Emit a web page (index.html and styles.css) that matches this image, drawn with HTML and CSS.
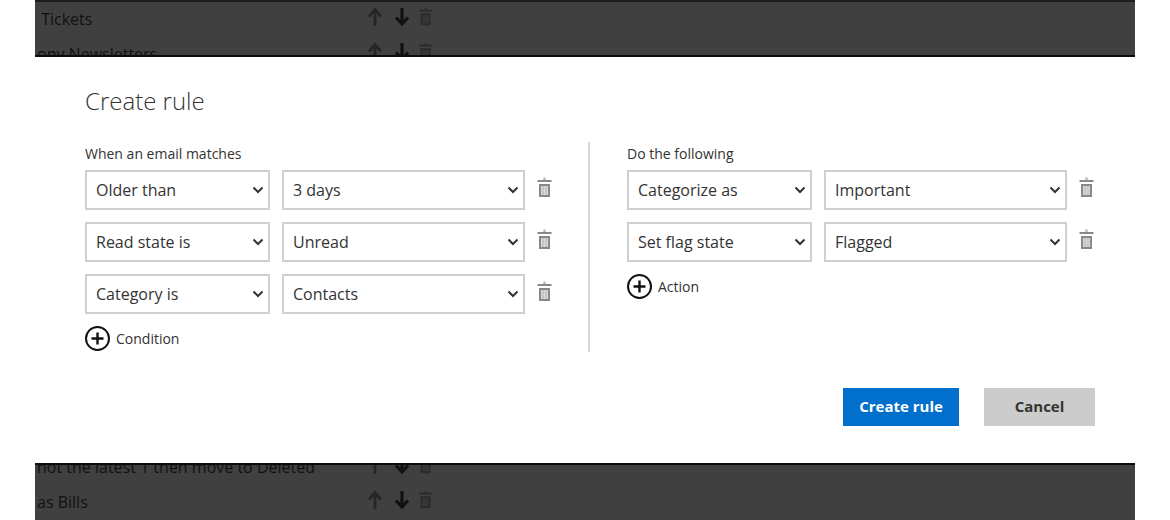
FILE: index.html
```
<!DOCTYPE html>
<html lang="en">
<head>
    <meta charset="UTF-8">
    <meta name="viewport" content="width=device-width, initial-scale=1.0">
    <title>Create rule</title>
    <link rel="stylesheet" href="styles.css">
</head>
<body>
    <svg class="sprite" aria-hidden="true">
        <symbol id="trash" viewBox="0 0 16 22">
            <path d="M7.500 0.500v3" fill="none" stroke="currentColor" stroke-width="2.4" opacity="0.6"/>
            <path d="M0.500 4h14" fill="none" stroke="currentColor" stroke-width="2"/>
            <path d="M3 8h9v11h-9z" fill="currentColor" fill-opacity="0.3" stroke="currentColor" stroke-width="2"/>
            <path d="M6 9v9M9 9v9" fill="none" stroke="currentColor" stroke-width="1" opacity="0.5"/>
        </symbol>
        <symbol id="up" viewBox="0 0 16 20">
            <path d="M8 19V3M2 9.5l6-7 6 7" fill="none" stroke="currentColor" stroke-width="2.8"/>
        </symbol>
        <symbol id="down" viewBox="0 0 16 20">
            <path d="M8 1v16M2 10.500l6 6.500 6-6.500" fill="none" stroke="currentColor" stroke-width="3.2"/>
        </symbol>
        <symbol id="chevron" viewBox="0 0 12 8">
            <path d="M1.500 1.500l4.500 4.500 4.500-4.500" fill="none" stroke="currentColor" stroke-width="2"/>
        </symbol>
        <symbol id="plus" viewBox="0 0 26 26">
            <circle cx="12.5" cy="12.5" r="11.5" fill="none" stroke="currentColor" stroke-width="2"/>
            <path d="M12.500 6.500v12M6.500 12.500h12" fill="none" stroke="currentColor" stroke-width="2.4"/>
        </symbol>
    </svg>

    <div class="rules rules-top" aria-hidden="true">
        <div class="rule"><span class="name">&nbsp;Tickets</span><svg class="up"><use href="#up"/></svg><svg class="down"><use href="#down"/></svg><svg class="bin"><use href="#trash"/></svg></div>
        <div class="rule"><span class="name">ony Newsletters</span><svg class="up"><use href="#up"/></svg><svg class="down"><use href="#down"/></svg><svg class="bin"><use href="#trash"/></svg></div>
    </div>

    <form class="dialog" role="dialog" aria-labelledby="title">
        <h1 id="title">Create rule</h1>
        <div class="columns">
            <fieldset class="conditions">
                <legend>When an email matches</legend>
                <div class="row">
                    <span class="select"><select aria-label="Condition 1"><option>Older than</option></select><svg><use href="#chevron"/></svg></span>
                    <span class="select"><select aria-label="Condition 1 value"><option>3 days</option></select><svg><use href="#chevron"/></svg></span>
                    <button type="button" class="remove" aria-label="Remove condition 1"><svg><use href="#trash"/></svg></button>
                </div>
                <div class="row">
                    <span class="select"><select aria-label="Condition 2"><option>Read state is</option></select><svg><use href="#chevron"/></svg></span>
                    <span class="select"><select aria-label="Condition 2 value"><option>Unread</option></select><svg><use href="#chevron"/></svg></span>
                    <button type="button" class="remove" aria-label="Remove condition 2"><svg><use href="#trash"/></svg></button>
                </div>
                <div class="row">
                    <span class="select"><select aria-label="Condition 3"><option>Category is</option></select><svg><use href="#chevron"/></svg></span>
                    <span class="select"><select aria-label="Condition 3 value"><option>Contacts</option></select><svg><use href="#chevron"/></svg></span>
                    <button type="button" class="remove" aria-label="Remove condition 3"><svg><use href="#trash"/></svg></button>
                </div>
                <button type="button" class="add"><svg><use href="#plus"/></svg>Condition</button>
            </fieldset>
            <fieldset class="actions">
                <legend>Do the following</legend>
                <div class="row">
                    <span class="select"><select aria-label="Action 1"><option>Categorize as</option></select><svg><use href="#chevron"/></svg></span>
                    <span class="select"><select aria-label="Action 1 value"><option>Important</option></select><svg><use href="#chevron"/></svg></span>
                    <button type="button" class="remove" aria-label="Remove action 1"><svg><use href="#trash"/></svg></button>
                </div>
                <div class="row">
                    <span class="select"><select aria-label="Action 2"><option>Set flag state</option></select><svg><use href="#chevron"/></svg></span>
                    <span class="select"><select aria-label="Action 2 value"><option>Flagged</option></select><svg><use href="#chevron"/></svg></span>
                    <button type="button" class="remove" aria-label="Remove action 2"><svg><use href="#trash"/></svg></button>
                </div>
                <button type="button" class="add"><svg><use href="#plus"/></svg>Action</button>
            </fieldset>
        </div>
        <div class="buttons">
            <button type="submit" class="primary">Create rule</button>
            <button type="button" class="cancel">Cancel</button>
        </div>
    </form>

    <div class="rules rules-bottom" aria-hidden="true">
        <div class="rule"><span class="name">not the latest 1 then move to Deleted</span><svg class="up"><use href="#up"/></svg><svg class="down"><use href="#down"/></svg><svg class="bin"><use href="#trash"/></svg></div>
        <div class="rule"><span class="name">as Bills</span><svg class="up"><use href="#up"/></svg><svg class="down"><use href="#down"/></svg><svg class="bin"><use href="#trash"/></svg></div>
    </div>
</body>
</html>
```

FILE: styles.css
```
* {
    box-sizing: border-box;
}

body {
    font-family: 'Segoe UI', 'Open Sans', sans-serif;
    font-size: 16px;
    color: #333;
    background-color: #fff;
    margin: 0;
    padding: 0 35px;
    min-height: 100vh;
    display: flex;
    flex-direction: column;
}

button,
select {
    font: inherit;
    color: inherit;
    margin: 0;
    border-radius: 0;
}

.sprite {
    display: none;
}

/* rule list behind the dialog */
.rules {
    height: 57px;
    overflow: hidden;
    display: flex;
    flex-direction: column;
    background-color: #404040;
    color: #111;
}

.rules-top {
    border-top: 2px solid #1c1c1c;
    border-bottom: 2px solid #0c0c0c;
}

.rules-bottom {
    border-top: 2px solid #0c0c0c;
    justify-content: flex-end;
}

.rule {
    flex: none;
    height: 35px;
    padding-left: 2px;
    display: flex;
    align-items: center;
}

.rule .name {
    width: 330px;
    padding-bottom: 2px;
    white-space: nowrap;
}

.rule svg {
    width: 16px;
    height: 20px;
    margin-bottom: 6px;
}

.rule .up {
    color: #262626;
}

.rule .down {
    margin-left: 11px;
    color: #111;
}

.rule .bin {
    margin-left: 8px;
    color: #2b2b2b;
}

.dialog {
    flex: 1;
    padding: 28px 40px 36px 50px;
    background-color: #fff;
}

h1 {
    margin: 0;
    font-size: 24px;
    font-weight: 300;
    line-height: 32px;
    color: #333;
}

.columns {
    display: grid;
    grid-template-columns: 1fr 1fr;
    margin-top: 25px;
}

fieldset {
    min-width: 0;
    margin: 0;
    padding: 0;
    border: 0;
}

.conditions {
    padding-right: 35px;
    border-right: 2px solid #d8d8d8;
}

.actions {
    padding-left: 37px;
}

/* floated so the divider runs the full height of the fieldset */
legend {
    float: left;
    width: 100%;
    padding: 0;
    font-size: 14px;
    line-height: 24px;
    margin-bottom: 4px;
}

.row {
    clear: both;
    display: grid;
    grid-template-columns: 185fr 243fr 16px;
    gap: 12px;
    margin-bottom: 12px;
}

.select {
    position: relative;
}

.select select {
    appearance: none;
    display: block;
    width: 100%;
    height: 40px;
    padding: 0 28px 0 9px;
    border: 2px solid #d0d0d0;
    background-color: #fff;
}

.select svg {
    position: absolute;
    right: 6px;
    top: 16px;
    width: 12px;
    height: 8px;
    pointer-events: none;
}

.remove {
    padding: 0 0 4px;
    border: 0;
    background: none;
    color: #888;
}

.remove svg {
    display: block;
    width: 16px;
    height: 22px;
}

.add {
    display: flex;
    align-items: center;
    gap: 5px;
    padding: 0;
    border: 0;
    background: none;
    font-size: 14px;
    line-height: 26px;
}

.add svg {
    width: 26px;
    height: 26px;
    color: #111;
}

.buttons {
    display: flex;
    justify-content: flex-end;
    gap: 25px;
    margin-top: 36px;
}

.buttons button {
    height: 38px;
    border: 0;
    padding: 0 0 2px;
    font-size: 15px;
    font-weight: 700;
}

.buttons .primary {
    width: 116px;
    background-color: #0070cc;
    color: #fff;
}

.buttons .cancel {
    width: 111px;
    background-color: #ccc;
}
```
